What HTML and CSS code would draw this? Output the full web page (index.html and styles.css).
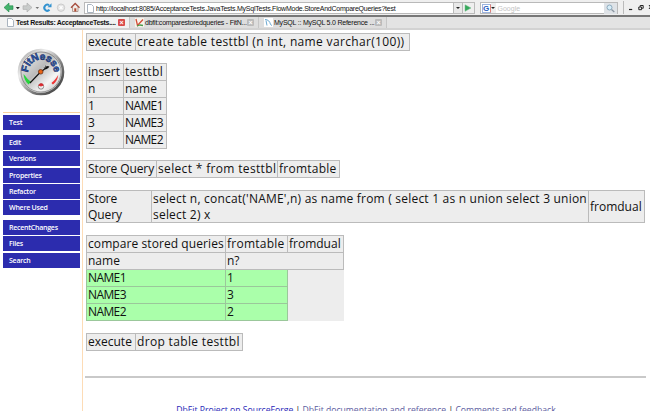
FILE: index.html
```
<!DOCTYPE html>
<html lang="en">
<head>
<meta charset="utf-8">
<title>Test Results: AcceptanceTests</title>
<link rel="stylesheet" href="styles.css">
</head>
<body>
<header>
  <div class="toolbar">
    <svg class="nav" width="84" height="15" viewBox="0 0 84 15">
      <path d="M4 7.5 9 3v2.800h4v3.600H9V12z" fill="#43b36b" stroke="#23864a" stroke-width=".6"/>
      <path d="M15.800 7h4l-2 2.200z" fill="#222"/>
      <path d="M23 7.500 28 3v0l5 0" fill="none"/>
      <path d="M32 7.500 27 3v2.800h-4v3.600h4V12z" fill="#c9cccb" stroke="#aaa" stroke-width=".6"/>
      <path d="M35.500 7h3.600l-1.800 2z" fill="#777"/>
      <path d="M49.500 9.800a3 3 0 1 1-.4-4.500" fill="none" stroke="#3292d0" stroke-width="2"/>
      <path d="M47.500 7.200h4V3.300z" fill="#3292d0"/>
      <circle cx="61" cy="7.700" r="3.700" fill="#e5e5e5" stroke="#ccc"/>
      <path d="m59.500 6.200 3 3m0-3-3 3" stroke="#fff" stroke-width="1.200"/>
      <path d="M72.500 7v4.500h5.500V7" fill="#f3e9e2" stroke="#a58a80" stroke-width=".8"/>
      <path d="m71 7.800 4.200-4.300 4.300 4.300" fill="none" stroke="#a64c3c" stroke-width="1.300"/>
      <path d="M74.300 8.300h2v3.200h-2z" fill="#b34a32"/>
    </svg>
    <div class="address">
      <svg width="9" height="9" viewBox="0 0 9 9"><path d="M1.500.5h4l2 2v6h-6z" fill="#fff" stroke="#aab4bf"/></svg>
      <span class="url">http://localhost:8085/AcceptanceTests.JavaTests.MySqlTests.FlowMode.StoreAndCompareQueries?test</span>
      <span class="drop"></span>
    </div>
    <div class="go"><svg width="8" height="8" viewBox="0 0 8 8"><path d="M1 .8 7 4 1 7.300z" fill="#36a85b" stroke="#75bd8c" stroke-width=".5"/></svg></div>
    <div class="search">
      <span class="engine">G</span><span class="drop plain"></span><span class="hint">Google</span>
      <svg width="13" height="11" viewBox="0 0 13 11"><path d="M0 0h13v11H0z" fill="#dfe3e7"/><circle cx="5.500" cy="4.500" r="2.500" fill="#d7edf8" stroke="#8daabd"/><path d="m7.500 6.500 2.800 2.500" stroke="#8b96a1" stroke-width="1.300"/></svg>
    </div>
    <svg class="window" width="27" height="15" viewBox="0 0 27 15">
      <path d="M.5 1v13" stroke="#bbb"/><path d="M6 9.500h3.200" stroke="#222" stroke-width="1.200"/>
      <path d="M17.200 6.800V5.500h3V8.300h-1M15.800 7h2.800v2.700h-2.800z" fill="none" stroke="#222"/>
      <path d="m26 5 3 4m0-4-3 4" stroke="#222"/>
    </svg>
  </div>
  <div class="tabs">
    <div class="tab active">
      <svg width="9" height="9" viewBox="0 0 9 9"><path d="M1.500.5h4l2 2v6h-6z" fill="#fff" stroke="#aab4bf"/></svg>
      <span class="label">Test Results: AcceptanceTests....</span><i class="close red">×</i>
    </div>
    <div class="tab second">
      <svg width="9" height="9" viewBox="0 0 9 9"><path d="M0 0h9v9H0z" fill="#f7f4ec"/><path d="m1 1 1.500 6.500L8 1.500" fill="none" stroke="#d44b36" stroke-width="1.300"/><path d="m2 8 3-1 3 .5" fill="none" stroke="#4b9b4b" stroke-width="1.300"/></svg>
      <span class="label">dbfit:comparestoredqueries - FitN...</span><i class="close">×</i>
    </div>
    <div class="tab third">
      <svg width="9" height="9" viewBox="0 0 9 9"><path d="M0 0h9v9H0z" fill="#fff"/><path d="M1 1.500c3 0 5 2 5.500 5l1.500 1M2 2.500l1 5" fill="none" stroke="#6ba9d2"/></svg>
      <span class="label">MySQL :: MySQL 5.0 Reference ...</span><i class="close">×</i>
    </div>
  </div>
</header>
<div class="page">
  <aside>
    <div class="logo">
      <svg width="48" height="48" viewBox="0 0 48 48">
        <defs>
          <linearGradient id="rim" x1="0" y1="0" x2="1" y2="1"><stop offset="0" stop-color="#999"/><stop offset=".3" stop-color="#eee"/><stop offset=".65" stop-color="#777"/><stop offset="1" stop-color="#333"/></linearGradient>
          <linearGradient id="face" x1="0" y1="0" x2="1" y2="1"><stop offset="0" stop-color="#fff"/><stop offset=".45" stop-color="#bbb"/><stop offset=".7" stop-color="#f5f5f5"/><stop offset="1" stop-color="#aaa"/></linearGradient>
          <path id="arc" d="M11.200 24.500A12.800 12.800 0 0 1 36.800 24.500V28"/>
        </defs>
        <circle cx="24" cy="24" r="22" fill="url(#face)" stroke="url(#rim)" stroke-width="2.600"/>
        <circle cx="24" cy="24" r="20" fill="none" stroke="#777" stroke-width=".7"/>
        <path d="M6.500 26c.4 4 2 7.600 5 10.500l2.600-2.700c-3-2-4.800-4.500-7.600-7.800z" fill="#27d53c"/>
        <path d="M41.200 27c-.5 4.200-2.200 7.500-5.300 9.500l-1.500-1.600c3-2 4.500-4.500 6.800-7.900z" fill="#ef3535"/>
        <text class="brand"><textPath href="#arc" textLength="40">FitNesse</textPath></text>
        <path d="M13 35 23 24.500l8-6" fill="none" stroke="#111" stroke-width="1.100"/>
        <path d="m26.500 19.500 2.300.3-.7-2.600 1.800 1.500 2.500-.8-1 2-2.700 1.600z" fill="#111"/>
        <circle cx="23.700" cy="23.800" r="2.300" fill="#e76316" stroke="#5a250e" stroke-width=".7"/>
        <circle cx="24" cy="38.500" r="2.700" fill="#eee" stroke="#666" stroke-width=".7"/>
        <path d="M21.800 37.200a2.600 2.600 0 0 1 4.500-.2L24 38z" fill="#d9272d" stroke="#d9272d"/>
      </svg>
    </div>
    <nav>
      <div class="group"><a>Test</a></div>
      <div class="group"><a>Edit</a><a>Versions</a><a>Properties</a><a>Refactor</a><a>Where Used</a></div>
      <div class="group"><a>RecentChanges</a><a>Files</a><a>Search</a></div>
    </nav>
  </aside>
  <main>
    <table class="create"><colgroup><col class="w49"><col class="w274"></colgroup>
      <tr><td>execute</td><td class="sql">create table testtbl (n int, name varchar(100))</td></tr></table>
    <table class="insert"><colgroup><col class="w37"><col class="w43"></colgroup>
      <tr><td>insert</td><td class="sql">testtbl</td></tr>
      <tr><td>n</td><td>name</td></tr>
      <tr><td>1</td><td class="value">NAME1</td></tr>
      <tr><td>3</td><td class="value">NAME3</td></tr>
      <tr><td>2</td><td class="value">NAME2</td></tr></table>
    <table class="store"><colgroup><col class="w70"><col class="w121"><col class="w62"></colgroup>
      <tr><td class="title">Store Query</td><td class="sql">select * from testtbl</td><td class="source">fromtable</td></tr></table>
    <table class="dual"><colgroup><col class="w65"><col class="w437"><col class="w56"></colgroup>
      <tr><td class="title">Store<br>Query</td><td class="union">select n, concat('NAME',n) as name from ( select 1 as n union select 3 union<br>select 2) x</td><td>fromdual</td></tr></table>
    <table class="compare"><colgroup><col class="w139"><col class="w62"><col class="w56"></colgroup>
      <tr><td class="heading">compare stored queries</td><td class="source">fromtable</td><td>fromdual</td></tr>
      <tr><td>name</td><td colspan="2">n?</td></tr>
      <tr class="pass"><td class="value">NAME1</td><td>1</td></tr>
      <tr class="pass"><td class="value">NAME3</td><td>3</td></tr>
      <tr class="pass"><td class="value">NAME2</td><td>2</td></tr></table>
    <table class="droptable"><colgroup><col class="w49"><col class="w107"></colgroup>
      <tr><td>execute</td><td class="sql">drop table testtbl</td></tr></table>
    <hr>
    <footer><a class="fresh">DbFit Project on SourceForge</a> | <a>DbFit documentation and reference</a> | <a>Comments and feedback</a></footer>
  </main>
</div>
</body>
</html>
```
FILE: styles.css
```
* { box-sizing: border-box; }
html, body { height: 100%; }
body { margin: 0; background: #fff; overflow: hidden; font-family: "Trebuchet MS", "Open Sans", sans-serif; color: #111; }
svg { display: block; flex: none; }
header { height: 30px; font: 7px/9px "Liberation Sans", sans-serif; }
.toolbar { display: flex; align-items: center; height: 15px; background: #efefef; }
.address { display: flex; align-items: center; width: 380px; height: 12px; margin-top: 1px; padding-left: 1px; border: 1px solid #b9b9b9; background: #fff; }
.address .url { flex: 1; margin-left: 1px; white-space: nowrap; letter-spacing: -.24px; }
.drop { width: 9px; height: 10px; border-left: 1px solid #bbb; background: #e9e9e9; display: flex; align-items: center; justify-content: center; }
.drop::after { content: ""; border: 2px solid transparent; border-top-color: #222; border-bottom: 0; }
.plain { border: 0; width: 5px; background: #eee; }
.go { display: flex; align-items: center; justify-content: center; width: 12px; height: 12px; margin-top: 1px; border: 1px solid #bbb; border-left: 0; }
.search { display: flex; align-items: center; width: 139px; height: 12px; margin: 1px 0 0 5px; border: 1px solid #b9b9b9; background: #fff; }
.engine { width: 9px; height: 9px; margin-left: 1px; border: 1px solid #9db5df; border-right-color: #df8078; color: #245dc1; font: bold 8px/7px "Liberation Sans", sans-serif; text-align: center; }
.hint { flex: 1; margin-left: 2px; color: #c4c4c4; }
.window { margin-left: 5px; }
.tabs { display: flex; height: 15px; border-top: 2px solid #777; border-bottom: 2px solid #d2d2d2; background: #e3e3e3; }
.tab { display: flex; align-items: center; height: 11px; padding-left: 5px; border-right: 1px solid #c6c6c6; background: #dedede; }
.tab .label { flex: 1; min-width: 0; margin-left: 1px; white-space: nowrap; letter-spacing: -.22px; }
.tab.active { width: 130px; padding-left: 6px; background: #f1f1f1; font-weight: bold; }
.tab.active .label { letter-spacing: -.31px; }
.second { width: 119px; flex: none; }
.tab.third { width: 128px; }
.tab.second { width: 129px; }
.close { flex: none; width: 7px; height: 7px; margin-right: 4px; border-radius: 1px; background: #bbb; color: #fff; font: bold 7px/7px "Liberation Sans", sans-serif; text-align: center; }
.red { background: #d94b4b; }
.page { display: flex; height: 381px; }
aside { width: 83px; border-right: 1px solid #fddcb6; padding: 18px 2px 0 3px; }
.logo { height: 65px; padding-left: 14px; border-bottom: 1px solid #f9d2a0; }
.brand { font: bold 10px "Liberation Sans", sans-serif; fill: #2a5fc0; stroke: #16285a; stroke-width: .5px; }
nav { padding-top: 2px; width: 77px; }
.group { display: grid; gap: 1.300px; margin-bottom: 5px; }
.group a { display: block; height: 15px; padding-left: 6px; background: #2c2cae; color: #fff; font: 600 7px/15px "Open Sans", sans-serif; letter-spacing: -.24px; }
main { flex: 1; padding: 3px 4px 0 3px; overflow: hidden; }
table { table-layout: fixed; border-collapse: collapse; margin: 0 0 12px; background: #ededed; font-size: 12px; line-height: 16px; }
td { height: 17px; padding: 0 1px; border: 1px solid #bbb; white-space: nowrap; }
.create { width: 324px; }
.insert { width: 81px; margin-bottom: 11px; }
.store { width: 254px; }
.dual { width: 559px; }
.dual td { height: 32px; line-height: 15.500px; }
.compare { width: 258px; }
.droptable { width: 157px; }
.sql { letter-spacing: .34px; }
.union { letter-spacing: .21px; }
.title { letter-spacing: -.1px; }
.source { letter-spacing: .25px; }
.heading { letter-spacing: .08px; }
.value { letter-spacing: -.6px; }
.w37 { width: 37px; } .w43 { width: 43px; } .w49 { width: 49px; } .w56 { width: 56px; }
.w62 { width: 62px; } .w65 { width: 65px; } .w70 { width: 70px; } .w107 { width: 107px; }
.w121 { width: 121px; } .w139 { width: 139px; } .w274 { width: 274px; } .w437 { width: 437px; }
.pass td { background: #afa; border-color: #9bc79b; }
hr { height: 2px; margin: 25px 0 0 -1px; border: 0; background: #c9c9c9; }
footer { padding-top: 26px; text-align: center; font-size: 8.650px; line-height: 13px; white-space: nowrap; }
footer a { color: #5c5ca0; text-decoration: underline; }
footer .fresh { color: #2727b8; }
```
